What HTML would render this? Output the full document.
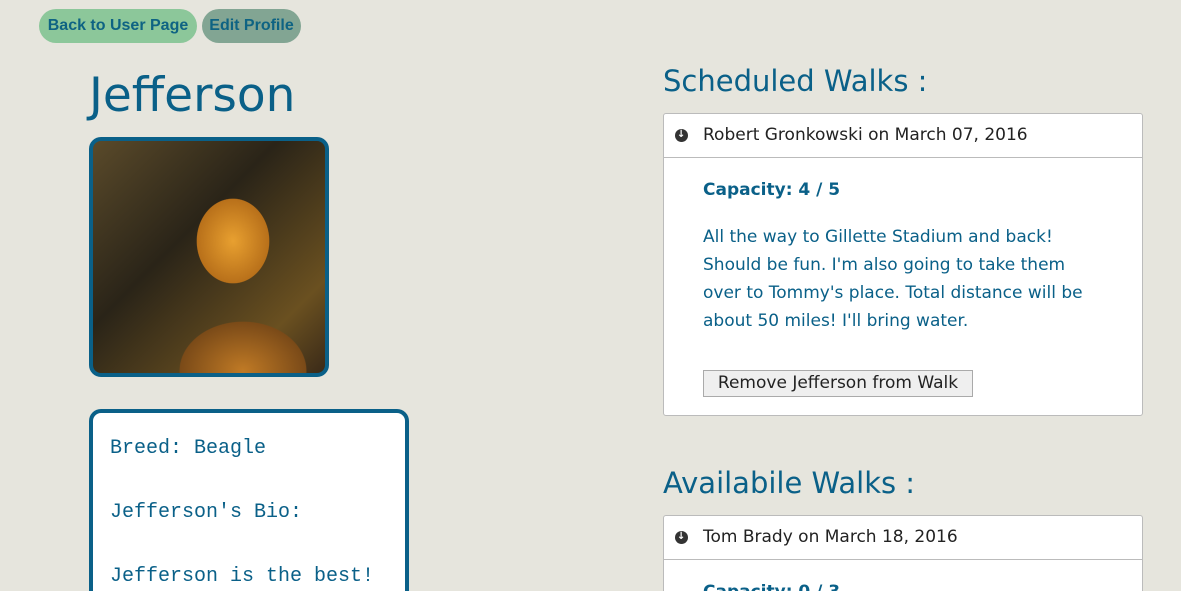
<!DOCTYPE html>
<html><head><style>
html,body{margin:0;width:1181px;height:591px;overflow:hidden}
body{background:#e6e5dd;position:relative;font-family:"DejaVu Sans",sans-serif;color:#0a6088}
.btn{position:absolute;top:9px;height:34px;border-radius:17px;font:bold 16px "Liberation Sans",sans-serif;color:#0e6383;line-height:34px;text-align:center}
h1{position:absolute;left:89px;top:68px;margin:0;font:400 47px "DejaVu Sans",sans-serif;color:#0a6088;letter-spacing:0px}
.photo{position:absolute;left:89px;top:137px;width:232px;height:232px;border:4px solid #0a6088;border-radius:12px;overflow:hidden;background:radial-gradient(ellipse 60px 70px at 140px 100px,#e8a030,#b8701a 60%,transparent 61%),radial-gradient(ellipse 90px 70px at 150px 230px,#c07a25,#7a4a18 70%,transparent 71%),linear-gradient(135deg,#5a4a2a,#2a2418 40%,#6a5020 80%,#3a2a18)}
.bio{position:absolute;left:89px;top:409px;width:312px;height:182px;border:4px solid #0a6088;border-bottom:0;border-radius:12px 12px 0 0;background:#fff;font:20px "Liberation Mono",monospace;color:#0a6088}
.bio div{position:absolute;left:17px}
h2{position:absolute;left:663px;margin:0;font:400 29px "DejaVu Sans",sans-serif;color:#0a6088}
.panel{position:absolute;left:663px;width:478px;background:#fff;border:1px solid #bbb;border-radius:3px}
.ph{height:43px;border-bottom:1px solid #bbb;font-size:17px;color:#222;line-height:43px;padding-left:39px;position:relative}
.ph:before{content:"";position:absolute;left:11px;top:15px;width:13px;height:13px;border-radius:50%;background:#333}
.ph:after{content:"↓";position:absolute;left:13px;top:-1px;font-size:10px;color:#fff;font-weight:bold}
</style></head><body>
<div class="btn" style="left:39px;width:158px;background:#8cc79a">Back to User Page</div>
<div class="btn" style="left:202px;width:99px;background:#82a593">Edit Profile</div>
<h1>Jefferson</h1>
<div class="photo"></div>
<div class="bio"><div style="top:24px">Breed: Beagle</div><div style="top:88px">Jefferson's Bio:</div><div style="top:152px">Jefferson is the best!</div></div>
<h2 style="top:64px">Scheduled Walks :</h2>
<div class="panel" style="top:113px;height:301px">
<div class="ph">Robert Gronkowski on March 07, 2016</div>
<div style="position:absolute;left:39px;top:66px;font-weight:bold;font-size:17px">Capacity: 4 / 5</div>
<div style="position:absolute;left:39px;top:109px;font-size:17px;line-height:28px;width:405px">All the way to Gillette Stadium and back! Should be fun. I'm also going to take them over to Tommy's place. Total distance will be about 50 miles! I'll bring water.</div>
<div style="position:absolute;left:39px;top:256px;width:268px;height:25px;border:1px solid #aaa;background:#efefef;color:#222;font-size:17px;line-height:25px;text-align:center">Remove Jefferson from Walk</div>
</div>
<h2 style="top:466px">Availabile Walks :</h2>
<div class="panel" style="top:515px;height:76px;border-bottom:0;border-radius:3px 3px 0 0;overflow:hidden">
<div class="ph">Tom Brady on March 18, 2016</div>
<div style="position:absolute;left:39px;top:66px;font-weight:bold;font-size:17px">Capacity: 0 / 3</div>
</div>
</body></html>
